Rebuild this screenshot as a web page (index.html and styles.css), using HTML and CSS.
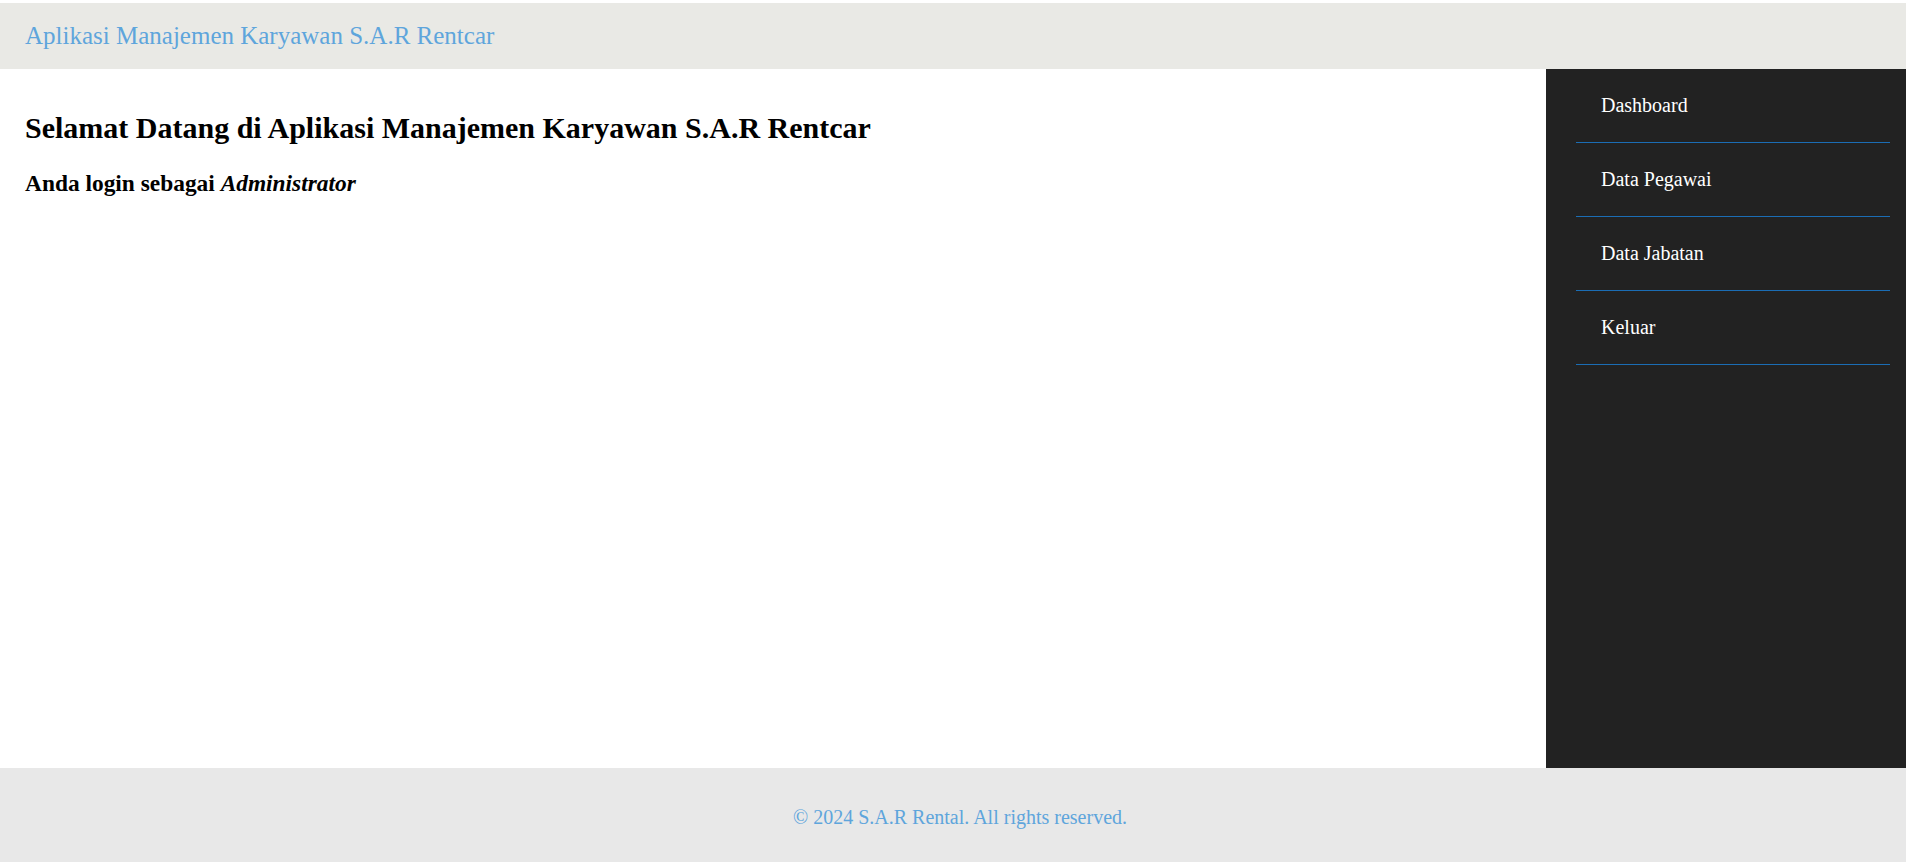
FILE: index.html
```html
<!DOCTYPE html>
<html lang="id">
<head>
<meta charset="utf-8">
<title>Aplikasi Manajemen Karyawan S.A.R Rentcar</title>
<link rel="stylesheet" href="styles.css">
</head>
<body>
<header class="topbar">
  <div class="brand">Aplikasi Manajemen Karyawan S.A.R Rentcar</div>
</header>
<div class="layout">
  <main class="content">
    <h2 class="welcome">Selamat Datang di Aplikasi Manajemen Karyawan S.A.R Rentcar</h2>
    <h3 class="role">Anda login sebagai <i>Administrator</i></h3>
  </main>
  <aside class="sidebar">
    <ul class="menu">
      <li><a href="#">Dashboard</a></li>
      <li><a href="#">Data Pegawai</a></li>
      <li><a href="#">Data Jabatan</a></li>
      <li><a href="#">Keluar</a></li>
    </ul>
  </aside>
</div>
<footer class="footer">
  <p>&copy; 2024 S.A.R Rental. All rights reserved.</p>
</footer>
</body>
</html>
```
FILE: styles.css
```css
html, body {
  margin: 0;
  padding: 0;
}
body {
  font-family: "Liberation Serif", "Times New Roman", serif;
  height: 862px;
  box-sizing: border-box;
  padding-top: 3px;
  display: flex;
  flex-direction: column;
  background: #ffffff;
}
.topbar {
  height: 66px;
  background: #e9e9e5;
  display: flex;
  align-items: center;
  padding-left: 25px;
  flex: none;
}
.brand {
  font-size: 25px;
  color: #5ea5dc;
}
.layout {
  flex: 1;
  display: flex;
  min-height: 0;
}
.content {
  flex: 1;
  padding: 17px 25px 0 25px;
}
.welcome {
  font-size: 30px;
  font-weight: bold;
  margin: 24.5px 0 25px 0;
  color: #000;
}
.role {
  font-size: 23.4px;
  font-weight: bold;
  margin: 0;
  color: #000;
}
.sidebar {
  width: 360px;
  flex: none;
  background: #222222;
}
.menu {
  list-style: none;
  margin: 0 16px 0 30px;
  padding: 0;
}
.menu li {
  border-bottom: 1px solid #1b6db4;
}
.menu a {
  display: block;
  padding: 25px;
  font-size: 20px;
  line-height: 23px;
  color: #ffffff;
  text-decoration: none;
}
.footer {
  height: 94px;
  flex: none;
  background: #e8e8e8;
  box-sizing: border-box;
  padding: 38px 0 0 14px;
  text-align: center;
}
.footer p {
  margin: 0;
  font-size: 20px;
  line-height: 23px;
  color: #5ea5dc;
}
```
